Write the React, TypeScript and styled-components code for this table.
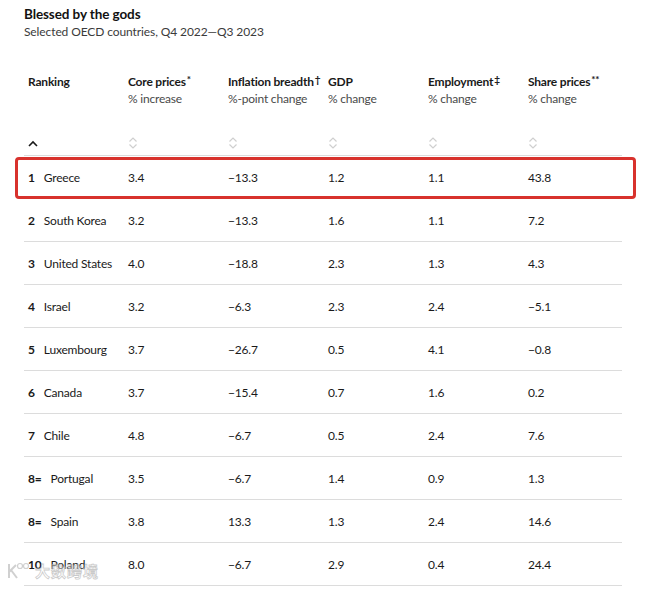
import styled, { createGlobalStyle } from "styled-components"

const GlobalStyle = createGlobalStyle`
  html, body {
    margin: 0;
    padding: 0;
    background: #fff;
  }
  body {
    font-family: Lato, "Noto Sans", "Liberation Sans", sans-serif;
    color: #1a1a1a;
  }
`

const Page = styled.div`
  position: relative;
  width: 660px;
  height: 589px;
  overflow: hidden;
  padding: 5px 0 0 24px;
  box-sizing: border-box;
`

const Title = styled.h1`
  margin: 0;
  font-size: 13.5px;
  line-height: 18px;
  font-weight: 700;
  letter-spacing: -0.1px;
  color: #121212;
`

const Subtitle = styled.p`
  margin: 0;
  font-size: 12px;
  line-height: 18px;
  letter-spacing: -0.1px;
  color: #3b3b3b;
`

const Table = styled.div`
  margin-top: 32px;
  width: 598px;
`

const Row = styled.div<{ $line?: boolean }>`
  display: grid;
  grid-template-columns: repeat(6, 100px);
  align-items: center;
  border-bottom: ${p => (p.$line ? "1px solid #dcdcdc" : "none")};
`

const HeadCell = styled.div`
  padding: 0 0 0 4px;
  height: 42px;
`

const HeadName = styled.div`
  font-size: 12px;
  line-height: 17px;
  font-weight: 700;
  letter-spacing: -0.2px;
  color: #1a1a1a;
  white-space: nowrap;

  sup {
    font-size: 10px;
    vertical-align: 3px;
    line-height: 0;
    margin-left: 1px;
  }
`

const HeadUnit = styled.div`
  font-size: 12px;
  line-height: 17px;
  letter-spacing: -0.2px;
  color: #4a4a4a;
  white-space: nowrap;
`

const SortCell = styled.div`
  height: 40px;
  padding: 0 0 5px 4px;
  box-sizing: border-box;
  display: flex;
  align-items: flex-end;
`

const DataRow = styled(Row)`
  height: 42px;
`

const Cell = styled.div`
  padding-left: 4px;
  font-size: 12px;
  letter-spacing: -0.2px;
  white-space: nowrap;
  color: #1a1a1a;
`

const Rank = styled.span`
  font-weight: 700;
  margin-right: 9px;
`

const Highlight = styled.div`
  position: absolute;
  left: 15px;
  top: 157px;
  width: 621px;
  height: 42px;
  box-sizing: border-box;
  border: 3px solid #d8322d;
  border-radius: 4px;
  pointer-events: none;
`

const Watermark = styled.div`
  position: absolute;
  left: 5px;
  top: 560px;
  display: flex;
  align-items: center;
  gap: 2px;
  pointer-events: none;
  opacity: 0.7;
`

const WatermarkText = styled.span`
  font-family: "Noto Sans CJK SC", sans-serif;
  font-size: 15px;
  font-weight: 700;
  letter-spacing: 1px;
  color: rgba(255, 255, 255, 0.6);
  -webkit-text-stroke: 0.8px #b5b5b5;
`

const SortUp = () => (
  <svg width="10" height="12" viewBox="0 0 10 12">
    <path d="M1 8 L5 4 L9 8" fill="none" stroke="#1a1a1a" strokeWidth="1.6" />
  </svg>
)

const SortBoth = () => (
  <svg width="10" height="14" viewBox="0 0 10 14">
    <path d="M1.5 5.5 L5 2 L8.5 5.5" fill="none" stroke="#cfcfcf" strokeWidth="1.2" />
    <path d="M1.5 8.5 L5 12 L8.5 8.5" fill="none" stroke="#cfcfcf" strokeWidth="1.2" />
  </svg>
)

const headers: [string, string, string][] = [
  ["Ranking", "", ""],
  ["Core prices", "*", "% increase"],
  ["Inflation breadth", "†", "%-point change"],
  ["GDP", "", "% change"],
  ["Employment", "‡", "% change"],
  ["Share prices", "**", "% change"],
]

const rows: [string, string, string, string, string, string, string][] = [
  ["1", "Greece", "3.4", "−13.3", "1.2", "1.1", "43.8"],
  ["2", "South Korea", "3.2", "−13.3", "1.6", "1.1", "7.2"],
  ["3", "United States", "4.0", "−18.8", "2.3", "1.3", "4.3"],
  ["4", "Israel", "3.2", "−6.3", "2.3", "2.4", "−5.1"],
  ["5", "Luxembourg", "3.7", "−26.7", "0.5", "4.1", "−0.8"],
  ["6", "Canada", "3.7", "−15.4", "0.7", "1.6", "0.2"],
  ["7", "Chile", "4.8", "−6.7", "0.5", "2.4", "7.6"],
  ["8=", "Portugal", "3.5", "−6.7", "1.4", "0.9", "1.3"],
  ["8=", "Spain", "3.8", "13.3", "1.3", "2.4", "14.6"],
  ["10", "Poland", "8.0", "−6.7", "2.9", "0.4", "24.4"],
]

function App() {
  return (
    <>
      <GlobalStyle />
      <Page>
        <Title>Blessed by the gods</Title>
        <Subtitle>Selected OECD countries, Q4 2022—Q3 2023</Subtitle>
        <Table>
          <Row>
            {headers.map(([name, mark, unit]) => (
              <HeadCell key={name}>
                <HeadName>
                  {name}
                  {mark && <sup>{mark}</sup>}
                </HeadName>
                {unit && <HeadUnit>{unit}</HeadUnit>}
              </HeadCell>
            ))}
          </Row>
          <Row $line>
            {headers.map(([name], i) => (
              <SortCell key={name}>{i === 0 ? <SortUp /> : <SortBoth />}</SortCell>
            ))}
          </Row>
          {rows.map(([rank, country, ...vals]) => (
            <DataRow $line key={country}>
              <Cell>
                <Rank>{rank}</Rank>
                {country}
              </Cell>
              {vals.map((v, i) => (
                <Cell key={i}>{v}</Cell>
              ))}
            </DataRow>
          ))}
        </Table>
        <Highlight />
        <Watermark>
          <svg width="28" height="20" viewBox="0 0 28 20">
            <path d="M4 3 V17 M4 11 L11 4 M6 9 L12 17" fill="none" stroke="#bdbdbd" strokeWidth="2" />
            <circle cx="15" cy="5" r="2.5" fill="none" stroke="#bdbdbd" strokeWidth="1.2" />
            <circle cx="21" cy="5" r="2.5" fill="none" stroke="#bdbdbd" strokeWidth="1.2" />
          </svg>
          <WatermarkText>大数跨境</WatermarkText>
        </Watermark>
      </Page>
    </>
  )
}

export default App
